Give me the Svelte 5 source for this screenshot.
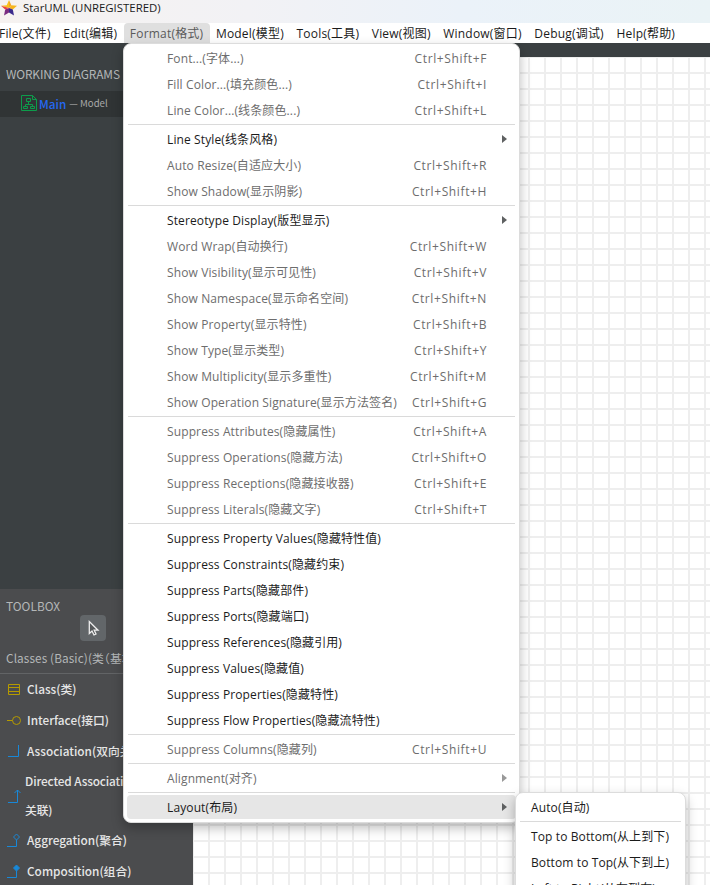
<script>
  const menus = ['File(文件)', 'Edit(编辑)', 'Format(格式)', 'Model(模型)', 'Tools(工具)', 'View(视图)', 'Window(窗口)', 'Debug(调试)', 'Help(帮助)'];
  const groups = [
    [['Font...(字体...)', 'F'], ['Fill Color...(填充颜色...)', 'I'], ['Line Color...(线条颜色...)', 'L']],
    [['Line Style(线条风格)', '>', 1], ['Auto Resize(自适应大小)', 'R'], ['Show Shadow(显示阴影)', 'H']],
    [['Stereotype Display(版型显示)', '>', 1], ['Word Wrap(自动换行)', 'W'], ['Show Visibility(显示可见性)', 'V'], ['Show Namespace(显示命名空间)', 'N'], ['Show Property(显示特性)', 'B'], ['Show Type(显示类型)', 'Y'], ['Show Multiplicity(显示多重性)', 'M'], ['Show Operation Signature(显示方法签名)', 'G']],
    [['Suppress Attributes(隐藏属性)', 'A'], ['Suppress Operations(隐藏方法)', 'O'], ['Suppress Receptions(隐藏接收器)', 'E'], ['Suppress Literals(隐藏文字)', 'T']],
    [['Suppress Property Values(隐藏特性值)', '', 1], ['Suppress Constraints(隐藏约束)', '', 1], ['Suppress Parts(隐藏部件)', '', 1], ['Suppress Ports(隐藏端口)', '', 1], ['Suppress References(隐藏引用)', '', 1], ['Suppress Values(隐藏值)', '', 1], ['Suppress Properties(隐藏特性)', '', 1], ['Suppress Flow Properties(隐藏流特性)', '', 1]],
    [['Suppress Columns(隐藏列)', 'U']],
    [['Alignment(对齐)', '>']],
    [['Layout(布局)', '>', 1, 1]]
  ];
</script>

<div class="app">
  <header class="title">
    <svg width="16" height="16" viewBox="0 0 16 16">
      <path d="M8 8L8 0L10.3 5.2Z" fill="#f5a623" /><path d="M8 8L8 0L5.7 5.2L0 5.8Z" fill="#f9c21b" />
      <path d="M8 8L10.3 5.2L16 5.8L11.8 9.6Z" fill="#f7b51d" /><path d="M8 8L11.8 9.6L13 15.5L8 12.5Z" fill="#3a2a8c" />
      <path d="M8 8L8 12.5L3 15.5L4.2 9.6Z" fill="#7a2c81" /><path d="M8 8L4.2 9.6L0 5.8Z" fill="#e8413c" />
    </svg>
    <span>StarUML (UNREGISTERED)</span>
  </header>
  <nav class="bar">
    {#each menus as label, i}<span class="top" class:open={i === 2}>{label}</span>{/each}
  </nav>
  <main>
    <aside>
      <section class="working">
        <h2>WORKING DIAGRAMS</h2>
        <div class="diagram">
          <svg width="16" height="16" viewBox="0 0 16 16" fill="none" stroke="#0d9c4b"><path d="M.5 .5H11.5L15.5 4.5V15.5H.5ZM11.5 .5V4.5H15.5M5.5 3.5H9.5V6.5H5.5ZM7.5 6.5V9.5M4.5 11V9.5H11.5V11M2.5 11.5H6.5V13.5H2.5ZM9.5 11.5H13.5V13.5H9.5Z" /></svg>
          <b>Main</b><small>— Model</small>
        </div>
      </section>
      <section class="toolbox">
        <h2>TOOLBOX</h2>
        <div class="pointer"><svg width="26" height="26" viewBox="0 0 26 26"><path d="M9.3 6.5V18.5L12 16L14 20L16 19L14.2 15.2H18Z" fill="#55585a" stroke="#eee" stroke-width="1.3" /></svg></div>
        <div class="category">Classes (Basic)(类（基本）)</div>
        <div class="tool"><svg width="15" height="16" viewBox="0 0 15 16" fill="none" stroke="#b59a00"><path d="M1.5 3.5H12.5V13.5H1.5ZM1.5 6.5H12.5M1.5 10.5H12.5" /></svg><span>Class(类)</span></div>
        <div class="tool"><svg width="15" height="16" viewBox="0 0 15 16" fill="none" stroke="#b59a00"><path d="M0 8.5H5.5" /><circle cx="9.5" cy="8.5" r="4" /></svg><span>Interface(接口)</span></div>
        <div class="tool"><svg width="15" height="16" viewBox="0 0 15 16" fill="none" stroke="#1888d8"><path d="M1 13.5H11.5V2" /></svg><span>Association(双向关联)</span></div>
        <div class="tool two"><svg width="15" height="16" viewBox="0 0 15 16" fill="none" stroke="#1888d8"><path d="M1 14.5H10.5V2M7.5 5L10.5 2L13.5 5" /></svg><span>Directed Association(定向<br />关联)</span></div>
        <div class="tool"><svg width="15" height="16" viewBox="0 0 15 16" fill="none" stroke="#1888d8"><path d="M0 14.5H9.5V8M9.5 2L12.5 5L9.5 8L6.5 5Z" /></svg><span>Aggregation(聚合)</span></div>
        <div class="tool"><svg width="15" height="16" viewBox="0 0 15 16" fill="none" stroke="#1888d8"><path d="M0 14.5H9.5V8" /><path d="M9.5 2L12.5 5L9.5 8L6.5 5Z" fill="#1888d8" /></svg><span>Composition(组合)</span></div>
      </section>
    </aside>
    <div class="canvas"></div>
  </main>

  <div class="menu format">
    {#each groups as group, i}
      {#if i}<hr />{/if}
      {#each group as [label, key, on, hot]}
        <div class="item" class:on class:hot>
          <span class="label">{label}</span>
          {#if key === '>'}<i class="arrow"></i>{:else if key}<span class="key">Ctrl+Shift+{key}</span>{/if}
        </div>
      {/each}
    {/each}
  </div>
  <div class="menu sub">
    <div class="item on">Auto(自动)</div>
    <hr />
    <div class="item on">Top to Bottom(从上到下)</div>
    <div class="item on">Bottom to Top(从下到上)</div>
    <div class="item on">Left to Right(从左到右)</div>
  </div>
</div>

<style>
  :global(body) { margin: 0; overflow: hidden; }
  .app { position: relative; width: 710px; height: 885px; overflow: hidden; display: flex; flex-direction: column; font: 12px 'Open Sans', 'Noto Sans CJK SC', sans-serif; color: #1b1b1b; white-space: nowrap; }
  .title { height: 23px; box-sizing: border-box; padding: 0 0 8px 1px; display: flex; align-items: center; gap: 6px; background: linear-gradient(90deg, #f6f2f0, #f2f2f5 35%, #ebf2f9 65%, #eaf3f6); font-size: 11.4px; }
  .bar { height: 20px; display: flex; align-items: center; background: #fff; letter-spacing: .2px; }
  .top { height: 20px; line-height: 22px; padding: 0 6.3px; border-radius: 4px 4px 0 0; }
  .top:first-child { padding-left: 0; margin-left: -1px; }
  .open { background: #dfdfdf; color: #5a5a5a; }
  main { flex: 1; display: flex; min-height: 0; background: #3b4042; }
  aside { width: 193px; display: flex; flex-direction: column; font: 500 11.8px 'Noto Sans CJK SC', sans-serif; color: #e6e6e6; }
  h2 { margin: 0; padding-left: 6px; font-size: 11.9px; font-weight: 400; letter-spacing: -.12px; color: #b4b7b8; }
  .working { flex: none; height: 546px; background: #3b4042; }
  .working h2 { height: 48px; line-height: 62px; }
  .diagram { height: 26px; box-sizing: border-box; display: flex; align-items: center; padding: 0 0 2px 21px; background: #303435; }
  .diagram b { margin-left: 2px; font-weight: 500; color: #2468f2; }
  small { margin-left: 3px; font-size: 9.6px; font-weight: 400; color: #aaa; }
  .toolbox { flex: 1; min-height: 0; background: #4b4c4e; }
  .toolbox h2 { height: 26px; line-height: 34px; letter-spacing: 0; }
  .pointer { margin-left: 80px; width: 26px; height: 26px; border-radius: 4px; background: #626669; }
  .category { height: 32px; line-height: 34px; padding-left: 6px; border-bottom: 1px solid #626466; color: #b4b7b8; font-weight: 400; font-feature-settings: 'halt'; letter-spacing: .1px; }
  .tool { height: 31px; display: flex; align-items: center; padding-left: 7px; gap: 5px; }
  .tool svg { margin-bottom: 1px; flex: none; }
  .tool span { padding-bottom: 2px; }
  .tool.two { height: 58px; gap: 3px; line-height: 29px; letter-spacing: -.12px; }
  .canvas { flex: 1; margin-top: 14px; background-color: #fff; background-image: linear-gradient(90deg, #eee 2px, transparent 2px), linear-gradient(#eee 2px, transparent 2px); background-size: 16px 16px; background-position: 15px 15px; }
  .menu { position: absolute; box-sizing: border-box; padding: 2px 3px; border: 1px solid #dcdcdc; border-radius: 8px; background: #fff; box-shadow: 0 5px 12px #0004; letter-spacing: .12px; }
  .format { left: 123px; top: 43px; width: 397px; height: 780px; }
  .sub { left: 515px; top: 792px; width: 171px; height: 140px; }
  hr { height: 1px; margin: 0 1px 2px; border: 0; background: #dadada; }
  .item { height: 26px; box-sizing: border-box; display: flex; align-items: center; padding: 0 29px 2px 40px; color: #6d6d6d; border-radius: 4px; }
  .sub .item { padding-left: 12px; }
  .on { color: #1b1b1b; }
  .hot { height: 24px; padding-bottom: 0; background: #e6e6e6; }
  .label { flex: 1; }
  .key { letter-spacing: .62px; }
  .arrow { margin-right: -20px; border-left: 5px solid #999; border-top: 4px solid transparent; border-bottom: 4px solid transparent; }
  .on .arrow { border-left-color: #5f6162; }
</style>
